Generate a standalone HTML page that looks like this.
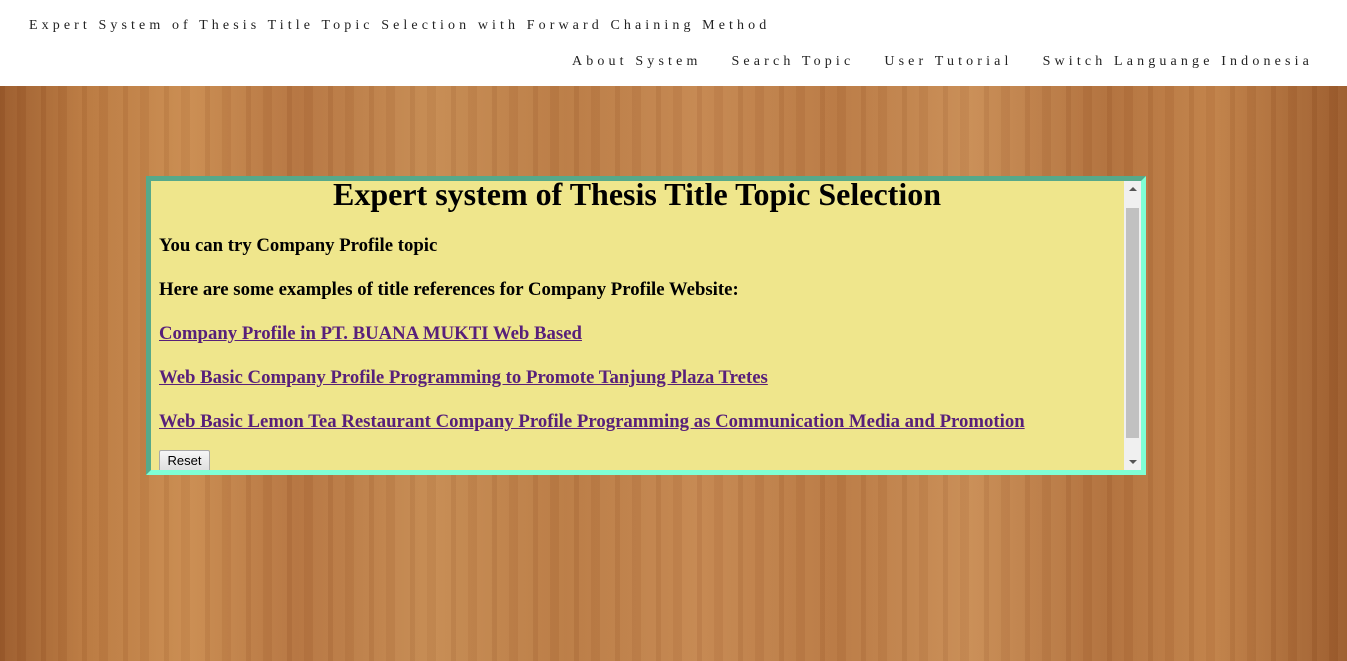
<!DOCTYPE html>
<html><head><style>
html,body{margin:0;padding:0;width:1347px;height:661px;overflow:hidden}
body{font-family:"Liberation Serif",serif;background:
repeating-linear-gradient(90deg,rgba(90,40,10,.06) 0 5px,rgba(255,220,160,.04) 5px 17px,rgba(90,40,10,.04) 17px 26px,rgba(255,220,160,.05) 26px 41px),
linear-gradient(90deg,#9a5a2c 0%,#b8773f 6%,#c98b50 14%,#b47340 22%,#c58a52 32%,#b97a44 42%,#c48650 52%,#b87843 62%,#c88c55 72%,#b06f3c 82%,#c08048 90%,#9a5a2c 100%);}
.hdr{position:absolute;left:0;top:0;width:1347px;height:86px;background:#fff}
.t{position:absolute;left:29px;top:18px;font-size:14px;letter-spacing:4.1px;color:#222;white-space:nowrap}
.nav{position:absolute;right:34px;top:54px;font-size:14px;letter-spacing:4.15px;color:#222;white-space:nowrap}
.nav span{margin-left:30px}
.box{position:absolute;left:146px;top:176px;width:990px;height:289px;border:5px solid;border-color:#56a98a #7fffd4 #7fffd4 #56a98a;background:#efe68c;overflow:hidden}
h1{margin:0;font-size:32px;text-align:center;position:absolute;top:-5px;left:3px;width:966px}
p{position:absolute;left:8px;margin:0;font-size:18.75px;font-weight:bold;white-space:nowrap}
a{color:#58207a;text-decoration:underline}
.btn{position:absolute;left:8px;top:269px;width:49px;height:21px;border:1px solid #aaa;border-radius:2px;background:linear-gradient(#f6f6f6,#ddd);font-family:"Liberation Sans",sans-serif;font-size:13px;text-align:center;line-height:20px}
.sb{position:absolute;right:0;top:0;width:17px;height:289px;background:#f0f0f0}
.th{position:absolute;left:2px;top:27px;width:13px;height:230px;background:#c1c1c1}
</style></head><body>
<div class="hdr"><div class="t">Expert System of Thesis Title Topic Selection with Forward Chaining Method</div>
<div class="nav"><span>About System</span><span>Search Topic</span><span>User Tutorial</span><span>Switch Languange Indonesia</span></div></div>
<div class="box">
<h1>Expert system of Thesis Title Topic Selection</h1>
<p style="top:54px">You can try Company Profile topic</p>
<p style="top:98px">Here are some examples of title references for Company Profile Website:</p>
<p style="top:142px"><a>Company Profile in PT. BUANA MUKTI Web Based</a></p>
<p style="top:186px"><a>Web Basic Company Profile Programming to Promote Tanjung Plaza Tretes</a></p>
<p style="top:230px"><a>Web Basic Lemon Tea Restaurant Company Profile Programming as Communication Media and Promotion</a></p>
<div class="btn">Reset</div>
<div class="sb"><div style="position:absolute;left:5px;top:6px;border:4px solid transparent;border-bottom:4px solid #555;border-top:0"></div><div class="th"></div><div style="position:absolute;left:5px;bottom:6px;border:4px solid transparent;border-top:4px solid #555;border-bottom:0"></div></div>
</div>
</body></html>
